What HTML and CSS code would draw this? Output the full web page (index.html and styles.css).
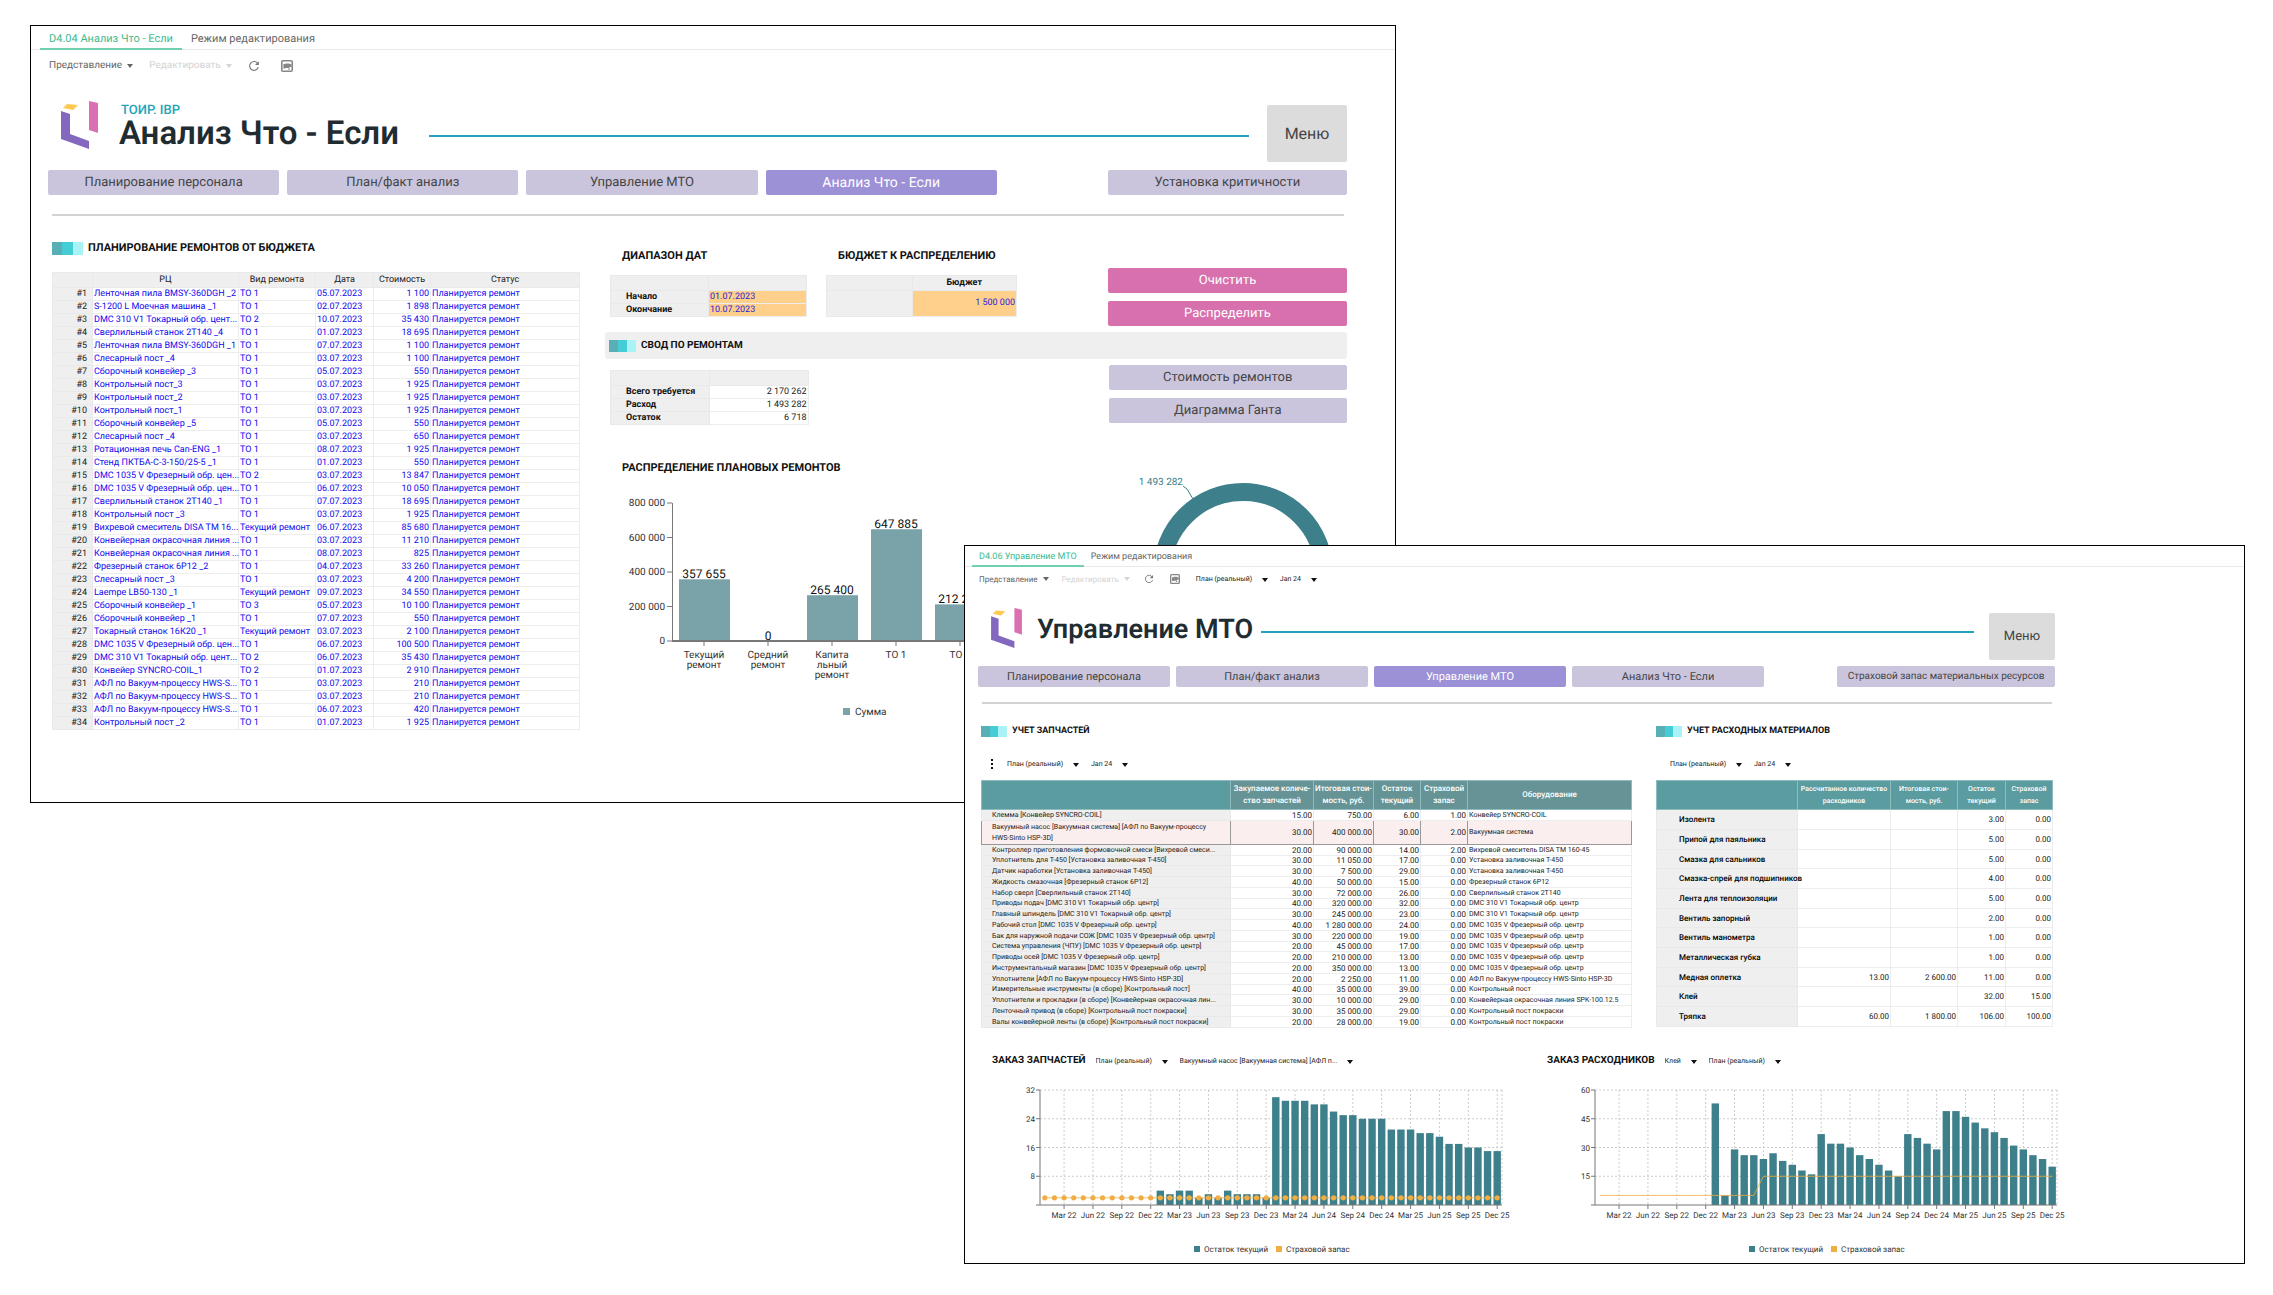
FILE: index.html
```html
<!DOCTYPE html>
<html lang="ru">
<head>
  <meta charset="UTF-8">
  <title>ТОИР. IBP</title>
  <link rel="stylesheet" href="styles.css">
</head>

<body>
  <svg class="sprite" aria-hidden="true">
    <symbol id="logo" viewBox="0 0 37 48">
      <polygon points="2,7 6,3 17,4 12,9" fill="#ffc850"/>
      <polygon points="28,0 37,2 37,32 28,29" fill="#db6fb1"/>
      <polygon points="0,10 9,13 9,33 28,40 28,48 0,38" fill="#8468c0"/>
    </symbol>
    <symbol id="refresh" viewBox="0 0 12 12">
      <path d="M9.8 3.6A4.4 4.4 0 1 0 10.3 7.2" fill="none" stroke="#777" stroke-width="1.1"/>
      <path d="M10.8 1.2v3.8H7z" fill="#777"/>
    </symbol>
    <symbol id="sheet" viewBox="0 0 12 12">
      <rect x="0.8" y="0.8" width="10.4" height="10.4" rx="1" fill="none" stroke="#888" stroke-width="1.6"/>
      <path d="M2.4 4h2v4.4h-2zM4.4 3.4h4v4.6h-4zM8.4 4h2v3h-2zM7 8.6h2v1H7z" fill="#888"/>
    </symbol>
  </svg>

  <main class="desktop">
    <!-- What-if analysis -->
    <section class="window whatIf">
      <div class="tabs">
        <a class="tab active" href="#">D4.04 Анализ Что - Если</a>
        <a class="tab" href="#">Режим редактирования</a>
      </div>
      <div class="toolbar">
        <button class="tool">Представление</button>
        <button class="tool" disabled>Редактировать</button>
        <button class="toolIcon" aria-label="Обновить"><svg><use href="#refresh"/></svg></button>
        <button class="toolIcon" aria-label="Экспорт"><svg><use href="#sheet"/></svg></button>
      </div>

      <div class="page">
        <header class="pageHeader">
          <svg class="logo"><use href="#logo"/></svg>
          <div class="titles">
            <div class="product">ТОИР. IBP</div>
            <h1>Анализ Что - Если</h1>
          </div>
          <div class="line"></div>
          <button class="menuBtn">Меню</button>
        </header>
        <nav class="navRow">
          <button class="btn">Планирование персонала</button>
          <button class="btn">План/факт анализ</button>
          <button class="btn">Управление МТО</button>
          <button class="btn current">Анализ Что - Если</button>
          <button class="btn last">Установка критичности</button>
        </nav>
        <hr>

        <div class="columns">
          <div class="repairs">
            <h2 class="sectionHead"><span class="swatch"></span>ПЛАНИРОВАНИЕ РЕМОНТОВ ОТ БЮДЖЕТА</h2>
            <table class="grid repairsTable">
              <colgroup><col class="cNum"><col class="cName"><col class="cKind"><col class="cDate"><col class="cCost"><col></colgroup>
              <thead>
                <tr><th></th><th>РЦ</th><th>Вид ремонта</th><th>Дата</th><th>Стоимость</th><th>Статус</th></tr>
              </thead>
              <tbody id="repairRows"></tbody>
            </table>
          </div>

          <div class="summary">
            <div class="params">
              <div class="dates">
                <h2>ДИАПАЗОН ДАТ</h2>
                <table class="grid small">
                  <thead><tr><th></th><th></th></tr></thead>
                  <tbody>
                    <tr><th><label for="dateFrom">Начало</label></th><td class="entry"><input id="dateFrom" value="01.07.2023"></td></tr>
                    <tr><th><label for="dateTo">Окончание</label></th><td class="entry"><input id="dateTo" value="10.07.2023"></td></tr>
                  </tbody>
                </table>
              </div>
              <div class="budget">
                <h2>БЮДЖЕТ К РАСПРЕДЕЛЕНИЮ</h2>
                <table class="grid small">
                  <colgroup><col class="cBlank"><col></colgroup>
                  <thead><tr><th></th><th><label for="budget">Бюджет</label></th></tr></thead>
                  <tbody>
                    <tr class="tall"><th></th><td class="entry num"><input id="budget" value="1 500 000"></td></tr>
                  </tbody>
                </table>
              </div>
              <div class="actions">
                <button class="btn pink">Очистить</button>
                <button class="btn pink">Распределить</button>
              </div>
            </div>

            <div class="bar">
              <h2 class="sectionHead"><span class="swatch"></span>СВОД ПО РЕМОНТАМ</h2>
            </div>

            <div class="totals">
              <table class="grid small">
                <thead><tr><th></th><th></th></tr></thead>
                <tbody>
                  <tr><th>Всего требуется</th><td class="num">2 170 262</td></tr>
                  <tr><th>Расход</th><td class="num">1 493 282</td></tr>
                  <tr><th>Остаток</th><td class="num">6 718</td></tr>
                </tbody>
              </table>
              <div class="actions">
                <button class="btn">Стоимость ремонтов</button>
                <button class="btn">Диаграмма Ганта</button>
              </div>
            </div>

            <div class="charts">
              <div class="planned">
                <h2>РАСПРЕДЕЛЕНИЕ ПЛАНОВЫХ РЕМОНТОВ</h2>
                <svg id="plannedChart" class="chart" viewBox="0 0 503 250"></svg>
              </div>
              <svg class="donut" viewBox="0 0 239 200">
                <circle cx="135" cy="112" r="81" fill="none" stroke="#3d7f8a" stroke-width="18"/>
                <path d="M75 25l4 3 6 10" fill="none" stroke="#3d7f8a"/>
                <text x="75" y="24" text-anchor="end" fill="#3d7f8a">1 493 282</text>
              </svg>
            </div>
          </div>
        </div>
      </div>
    </section>

    <!-- Supply management -->
    <section class="window supply">
      <div class="tabs">
        <a class="tab active" href="#">D4.06 Управление МТО</a>
        <a class="tab" href="#">Режим редактирования</a>
      </div>
      <div class="toolbar">
        <button class="tool">Представление</button>
        <button class="tool" disabled>Редактировать</button>
        <button class="toolIcon" aria-label="Обновить"><svg><use href="#refresh"/></svg></button>
        <button class="toolIcon" aria-label="Экспорт"><svg><use href="#sheet"/></svg></button>
        <label class="picker"><select aria-label="Версия"><option>План (реальный)</option></select></label>
        <label class="picker"><select aria-label="Период"><option>Jan 24</option></select></label>
      </div>

      <div class="page">
        <header class="pageHeader">
          <svg class="logo"><use href="#logo"/></svg>
          <h1>Управление МТО</h1>
          <div class="line"></div>
          <button class="menuBtn">Меню</button>
        </header>
        <nav class="navRow">
          <button class="btn">Планирование персонала</button>
          <button class="btn">План/факт анализ</button>
          <button class="btn current">Управление МТО</button>
          <button class="btn">Анализ Что - Если</button>
          <button class="btn last">Страховой запас материальных ресурсов</button>
        </nav>
        <hr>

        <div class="stock">
          <div class="parts">
            <h2 class="sectionHead"><span class="swatch"></span>УЧЕТ ЗАПЧАСТЕЙ</h2>
            <div class="pickers">
              <button class="dots" aria-label="Ещё"><i></i><i></i><i></i></button>
              <label class="picker"><select aria-label="Версия"><option>План (реальный)</option></select></label>
              <label class="picker"><select aria-label="Период"><option>Jan 24</option></select></label>
            </div>
            <table class="grid partsTable">
              <colgroup><col class="cPart"><col class="cQty"><col class="cSum"><col class="cRest"><col class="cRest"><col></colgroup>
              <thead>
                <tr><th></th><th>Закупаемое количе-<br>ство запчастей</th><th>Итоговая стои-<br>мость, руб.</th><th>Остаток<br>текущий</th><th>Страховой<br>запас</th><th>Оборудование</th></tr>
              </thead>
              <tbody id="partRows"></tbody>
            </table>
          </div>
          <div class="materials">
            <h2 class="sectionHead"><span class="swatch"></span>УЧЕТ РАСХОДНЫХ МАТЕРИАЛОВ</h2>
            <div class="pickers">
              <label class="picker"><select aria-label="Версия"><option>План (реальный)</option></select></label>
              <label class="picker"><select aria-label="Период"><option>Jan 24</option></select></label>
            </div>
            <table class="grid materialsTable">
              <colgroup><col class="cMaterial"><col class="cQty"><col class="cSum"><col class="cRest"><col></colgroup>
              <thead>
                <tr><th></th><th>Рассчитанное количество<br>расходников</th><th>Итоговая стои-<br>мость, руб.</th><th>Остаток<br>текущий</th><th>Страховой<br>запас</th></tr>
              </thead>
              <tbody id="materialRows"></tbody>
            </table>
          </div>
        </div>

        <div class="orders">
          <div class="order">
            <div class="orderHead">
              <h2>ЗАКАЗ ЗАПЧАСТЕЙ</h2>
              <label class="picker"><select aria-label="Версия"><option>План (реальный)</option></select></label>
              <label class="picker"><select aria-label="Запчасть"><option>Вакуумный насос [Вакуумная система] [АФЛ п...</option></select></label>
            </div>
            <svg id="partsChart" class="chart" viewBox="0 0 522 180"></svg>
          </div>
          <div class="order">
            <div class="orderHead">
              <h2>ЗАКАЗ РАСХОДНИКОВ</h2>
              <label class="picker"><select aria-label="Материал"><option>Клей</option></select></label>
              <label class="picker"><select aria-label="Версия"><option>План (реальный)</option></select></label>
            </div>
            <svg id="materialsChart" class="chart" viewBox="0 0 522 180"></svg>
          </div>
        </div>
      </div>
    </section>
  </main>

  <script src="script.js"></script>
</body>
</html>
```
FILE: styles.css
```css
* { box-sizing: border-box; margin: 0; padding: 0; }
body {
  font-family: Roboto, "Liberation Sans", sans-serif;
  font-size: 9px;
  text-rendering: geometricPrecision;
  background: #fff;
  color: #222;
}
button, select, input { font: inherit; color: inherit; border: 0; background: none; text-rendering: inherit; }
button { cursor: pointer; white-space: nowrap; }
a { color: inherit; text-decoration: none; }
.sprite { display: none; }

.desktop { position: relative; min-height: 100vh; }
.window {
  position: absolute;
  background: #fff;
  border: 1px solid #000;
}
.whatIf { top: 25px; left: 30px; right: 877px; padding-bottom: 72px; }
.supply { top: 545px; left: 964px; right: 28px; padding-bottom: 4px; }

/* Tabs and toolbar */
.tabs {
  display: flex;
  padding-left: 9px;
  height: 24px;
  border-bottom: 1px solid #e9e9e9;
  font-size: 11px;
  line-height: 26px;
  color: #666;
}
.tab { padding: 0 9px; height: 24px; }
.tab.active { color: #3dba8c; border-bottom: 2px solid #6fcfae; }
.toolbar {
  display: flex;
  align-items: center;
  height: 31px;
  padding-left: 18px;
  font-size: 10px;
  color: #666;
}
.tool { display: flex; align-items: center; gap: 5px; margin-right: 16px; }
.tool::after, .picker::after {
  content: "";
  border: 3px solid transparent;
  border-top: 4px solid currentColor;
  border-bottom: 0;
}
.tool:disabled { color: #d4d4d4; }
.toolIcon { display: flex; margin-right: 21px; }
.toolIcon svg { width: 12px; height: 12px; }

/* Page header */
.page { padding: 0 48px 0 17px; }
.pageHeader { display: flex; align-items: center; height: 57px; margin-top: 24px; }
.logo { width: 37px; height: 48px; margin: 0 21px 18px 13px; }
.titles { padding-bottom: 15px; }
.product { font-size: 13px; line-height: 16px; font-weight: 500; color: #20a5b8; padding-left: 2px; }
h1 { font-size: 33px; line-height: 30px; font-weight: 600; color: #1f2d33; white-space: nowrap; }
.line { flex: 1; height: 2px; background: #1fa3b8; margin: 5px 18px 0 30px; }
.menuBtn { width: 80px; height: 57px; background: #dcdcdc; border-radius: 2px; font-size: 16px; color: #444; }
.navRow {
  display: grid;
  grid-template-columns: repeat(4, 231fr) 95fr 239fr;
  gap: 8px;
  margin-top: 8px;
}
.btn {
  height: 25px;
  border-radius: 2px;
  background: #cac5dd;
  color: #444;
  font-size: 13px;
}
.btn.current { background: #9c90d6; color: #fff; }
.whatIf .btn.current { font-size: 14px; }
.btn.pink { background: #d870ae; color: #fff; }
.btn.last { grid-column: 6; }
hr { border: 0; height: 2px; background: #d3d3d3; margin: 19px 3px 0 4px; }

h2 { font-size: 11px; line-height: 14px; font-weight: 700; color: #111; white-space: nowrap; }
.sectionHead { display: flex; align-items: center; gap: 5px; }
.swatch {
  width: 31px;
  height: 13px;
  background: linear-gradient(90deg, #58b0b6 33%, #45ccd4 33% 67%, #a9f2f5 67%);
}

/* Tables */
.grid { width: 100%; border-collapse: collapse; table-layout: fixed; }
.grid th, .grid td {
  border: 1px solid #ededed;
  height: 13px;
  padding: 0 1px;
  line-height: 11px;
  white-space: nowrap;
}
.grid th { background: #efefef; border-color: #e9e9e9; }
.grid thead th { height: 15px; }
.num { text-align: right; }

.columns { display: grid; grid-template-columns: 528fr 742fr; gap: 25px; padding-left: 4px; }
.repairs { padding-top: 25px; }
.repairsTable { margin-top: 17px; }
.repairsTable th { font-weight: 400; }
.repairsTable tbody th { text-align: right; padding-right: 5px; }
.repairsTable td { color: #0f08f0; }
.cNum { width: 40px; }
.cName { width: 146px; }
.cKind { width: 77px; }
.cDate { width: 58px; }
.cCost { width: 57px; }

.params { display: flex; padding: 33px 0 0 5px; }
.dates { flex: 197; margin-right: 19px; }
.budget { flex: 191; }
.cBlank { width: 45%; }
.params h2 { margin: 0 0 12px 12px; }
.actions { flex: 239; display: grid; gap: 8px; margin-left: 91px; align-content: start; }
.params .actions { padding-top: 19px; }
.small th { text-align: left; padding-left: 15px; font-weight: 700; color: #111; }
.small thead th { text-align: center; padding: 0; }
.small .entry { background: #ffd08c; color: #2a1cd8; }
.entry input { display: block; width: 100%; height: 11px; }
.entry.num input { text-align: right; }
.small .tall td { height: 26px; }

.bar { height: 27px; padding: 7px 4px; margin-top: 6px; background: #efefef; border-radius: 3px; }
.bar h2 { font-size: 10px; }
.bar .swatch { width: 27px; height: 12px; }
.totals { display: flex; justify-content: space-between; padding: 6px 0 0 5px; }
.totals .small { flex: 198; margin-top: 5px; align-self: flex-start; }
.totals .actions { margin-left: 300px; }

.charts { display: flex; margin-top: 36px; }
.planned { flex: 503; }
.planned h2 { margin-left: 17px; }
.chart { display: block; width: 100%; overflow: visible; font-size: 8px; fill: #333; }
#plannedChart { font-size: 10px; }
.donut { flex: 239; font-size: 10px; align-self: flex-start; }
.axis { stroke: #777; fill: none; }
.dash { stroke: #ccc; stroke-dasharray: 2 2; fill: none; }
.value { font-size: 12px; fill: #111; }

/* The second window is the same page at a smaller scale */
.supply .tabs { height: 21px; padding-left: 7px; font-size: 9px; line-height: 23px; }
.supply .tab { height: 21px; padding: 0 7px; }
.supply .toolbar { height: 24px; padding-left: 14px; font-size: 8px; }
.supply .tool { gap: 5px; margin-right: 13px; }
.supply .tool:disabled { margin-right: 14px; }
.supply .toolIcon { margin-right: 16px; }
.supply .toolIcon svg { width: 10px; height: 10px; }
.supply .page { padding: 0 189px 0 13px; }
.supply .pageHeader { height: 47px; margin-top: 22px; }
.supply .logo { width: 31px; height: 40px; margin: 0 15px 18px 13px; }
.supply h1 { font-size: 27px; padding-bottom: 16px; }
.supply .line { margin: 0 15px 9px 8px; }
.supply .menuBtn { width: 66px; height: 47px; font-size: 13px; }
.supply .navRow { grid-template-columns: repeat(4, 192fr) 61fr 218fr; gap: 6px; margin-top: 6px; }
.supply .btn { height: 21px; font-size: 11px; }
.supply .btn.last { font-size: 10px; }
.supply hr { margin-top: 15px; }
.supply h2 { font-size: 10px; }
.supply .sectionHead { font-size: 9px; }
.supply .swatch { width: 26px; height: 11px; }

.picker { position: relative; margin-right: 12px; font-size: 7px; color: #222; }
.picker::after { position: absolute; right: 0; top: 3px; color: #111; pointer-events: none; }
.picker select { appearance: none; padding-right: 15px; }
.stock { display: grid; grid-template-columns: 651fr 397fr; gap: 24px; padding: 20px 2px 0 3px; }
.pickers { display: flex; align-items: center; height: 14px; margin: 19px 0 9px; padding-left: 10px; }
.materials .pickers { padding-left: 14px; }
.dots { display: grid; gap: 2px; margin-right: 14px; }
.dots i { width: 2px; height: 2px; background: #111; }

.supply .grid { font-size: 7px; }
.supply .grid .num { font-size: 8px; }
.supply .grid th { font-weight: 400; }
.supply .grid td, .supply .grid th { height: 11px; line-height: 9px; padding: 0 1px; }
.supply .grid tbody th { text-align: left; padding-left: 10px; }
.supply .grid thead th {
  height: 29px;
  line-height: 12px;
  font-size: 8px;
  padding: 0;
  background: #5b9ca0;
  border-color: #8fbcbf;
  color: #fff;
  font-weight: 500;
}
.supply .materialsTable thead th { font-size: 7px; }
.supply .partsTable thead th + th { background: #669496; }
.supply .partsTable tbody tr:nth-child(4n) > * { height: 10px; }
.supply .partsTable .selected > * {
  height: 24px;
  line-height: 11px;
  background: #faeeee;
  border-color: #999;
}
.supply .partsTable .selected th { white-space: normal; padding-right: 20px; }
.cPart { width: 249px; }
.partsTable .cQty { width: 83px; }
.partsTable .cSum { width: 60px; }
.partsTable .cRest { width: 47px; }
.supply .materialsTable tbody th { font-size: 8px; font-weight: 500; padding-left: 22px; color: #000; }
.supply .materialsTable tbody > tr > * { height: 20px; }
.supply .materialsTable tbody > tr:nth-child(3n) > * { height: 19px; }
.cMaterial { width: 141px; }
.materialsTable .cQty { width: 93px; }
.materialsTable .cSum { width: 67px; }
.materialsTable .cRest { width: 48px; }

.orders {
  display: grid;
  grid-template-columns: 1fr 1fr;
  gap: 33px;
  margin: 25px -14px 0 0;
  padding-left: 14px;
}
.orderHead { display: flex; align-items: center; height: 15px; margin-bottom: 11px; }
.orderHead h2 { margin-right: 10px; }
```
FILE: script.js
```js
const repairs = [
  ["Ленточная пила BMSY-360DGH _2", "ТО 1", "05.07.2023", "1 100"],
  ["S-1200 L Моечная машина _1", "ТО 1", "02.07.2023", "1 898"],
  ["DMC 310 V1 Токарный обр. цент...", "ТО 2", "10.07.2023", "35 430"],
  ["Сверлильный станок 2Т140 _4", "ТО 1", "01.07.2023", "18 695"],
  ["Ленточная пила BMSY-360DGH _1", "ТО 1", "07.07.2023", "1 100"],
  ["Слесарный пост _4", "ТО 1", "03.07.2023", "1 100"],
  ["Сборочный конвейер _3", "ТО 1", "05.07.2023", "550"],
  ["Контрольный пост_3", "ТО 1", "03.07.2023", "1 925"],
  ["Контрольный пост_2", "ТО 1", "03.07.2023", "1 925"],
  ["Контрольный пост_1", "ТО 1", "03.07.2023", "1 925"],
  ["Сборочный конвейер _5", "ТО 1", "05.07.2023", "550"],
  ["Слесарный пост _4", "ТО 1", "03.07.2023", "650"],
  ["Ротационная печь Can-ENG _1", "ТО 1", "08.07.2023", "1 925"],
  ["Стенд ПКТБА-С-3-150/25-5 _1", "ТО 1", "01.07.2023", "550"],
  ["DMC 1035 V Фрезерный обр. цен...", "ТО 2", "03.07.2023", "13 847"],
  ["DMC 1035 V Фрезерный обр. цен...", "ТО 1", "06.07.2023", "10 050"],
  ["Сверлильный станок 2Т140 _1", "ТО 1", "07.07.2023", "18 695"],
  ["Контрольный пост _3", "ТО 1", "03.07.2023", "1 925"],
  ["Вихревой смеситель DISA TM 16...", "Текущий ремонт", "06.07.2023", "85 680"],
  ["Конвейерная окрасочная линия ...", "ТО 1", "03.07.2023", "11 210"],
  ["Конвейерная окрасочная линия ...", "ТО 1", "08.07.2023", "825"],
  ["Фрезерный станок 6Р12 _2", "ТО 1", "04.07.2023", "33 260"],
  ["Слесарный пост _3", "ТО 1", "03.07.2023", "4 200"],
  ["Laempe LB50-130 _1", "Текущий ремонт", "09.07.2023", "34 550"],
  ["Сборочный конвейер _1", "ТО 3", "05.07.2023", "10 100"],
  ["Сборочный конвейер _1", "ТО 1", "07.07.2023", "550"],
  ["Токарный станок 16К20 _1", "Текущий ремонт", "03.07.2023", "2 100"],
  ["DMC 1035 V Фрезерный обр. цен...", "ТО 1", "06.07.2023", "100 500"],
  ["DMC 310 V1 Токарный обр. цент...", "ТО 2", "06.07.2023", "35 430"],
  ["Конвейер SYNCRO-COIL_1", "ТО 2", "01.07.2023", "2 910"],
  ["АФЛ по Вакуум-процессу HWS-S...", "ТО 1", "03.07.2023", "210"],
  ["АФЛ по Вакуум-процессу HWS-S...", "ТО 1", "03.07.2023", "210"],
  ["АФЛ по Вакуум-процессу HWS-S...", "ТО 1", "06.07.2023", "420"],
  ["Контрольный пост _2", "ТО 1", "01.07.2023", "1 925"]
];

const parts = [
  ["Клемма [Конвейер SYNCRO-COIL]", "15.00", "750.00", "6.00", "1.00", "Конвейер SYNCRO-COIL"],
  ["Вакуумный насос [Вакуумная система] [АФЛ по Вакуум-процессу HWS-Sinto HSP-3D]", "30.00", "400 000.00", "30.00", "2.00", "Вакуумная система"],
  ["Контроллер приготовления формовочной смеси [Вихревой смеси...", "20.00", "90 000.00", "14.00", "2.00", "Вихревой смеситель DISA TM 160-45"],
  ["Уплотнитель для T-450 [Установка заливочная T-450]", "30.00", "11 050.00", "17.00", "0.00", "Установка заливочная T-450"],
  ["Датчик наработки [Установка заливочная T-450]", "30.00", "7 500.00", "29.00", "0.00", "Установка заливочная T-450"],
  ["Жидкость смазочная [Фрезерный станок 6Р12]", "40.00", "50 000.00", "15.00", "0.00", "Фрезерный станок 6Р12"],
  ["Набор сверл [Сверлильный станок 2Т140]", "30.00", "72 000.00", "26.00", "0.00", "Сверлильный станок 2Т140"],
  ["Приводы подач [DMC 310 V1 Токарный обр. центр]", "40.00", "320 000.00", "32.00", "0.00", "DMC 310 V1 Токарный обр. центр"],
  ["Главный шпиндель [DMC 310 V1 Токарный обр. центр]", "30.00", "245 000.00", "23.00", "0.00", "DMC 310 V1 Токарный обр. центр"],
  ["Рабочий стол [DMC 1035 V Фрезерный обр. центр]", "40.00", "1 280 000.00", "24.00", "0.00", "DMC 1035 V Фрезерный обр. центр"],
  ["Бак для наружной подачи СОЖ [DMC 1035 V Фрезерный обр. центр]", "30.00", "220 000.00", "19.00", "0.00", "DMC 1035 V Фрезерный обр. центр"],
  ["Система управления (ЧПУ) [DMC 1035 V Фрезерный обр. центр]", "20.00", "45 000.00", "17.00", "0.00", "DMC 1035 V Фрезерный обр. центр"],
  ["Приводы осей [DMC 1035 V Фрезерный обр. центр]", "20.00", "210 000.00", "13.00", "0.00", "DMC 1035 V Фрезерный обр. центр"],
  ["Инструментальный магазин [DMC 1035 V Фрезерный обр. центр]", "20.00", "350 000.00", "13.00", "0.00", "DMC 1035 V Фрезерный обр. центр"],
  ["Уплотнители [АФЛ по Вакуум-процессу HWS-Sinto HSP-3D]", "20.00", "2 250.00", "11.00", "0.00", "АФЛ по Вакуум-процессу HWS-Sinto HSP-3D"],
  ["Измерительные инструменты (в сборе) [Контрольный пост]", "40.00", "35 000.00", "39.00", "0.00", "Контрольный пост"],
  ["Уплотнители и прокладки (в сборе) [Конвейерная окрасочная лин...", "30.00", "10 000.00", "29.00", "0.00", "Конвейерная окрасочная линия SPK-100.12.5"],
  ["Ленточный привод (в сборе) [Контрольный пост покраски]", "30.00", "35 000.00", "29.00", "0.00", "Контрольный пост покраски"],
  ["Валы конвейерной ленты (в сборе) [Контрольный пост покраски]", "20.00", "28 000.00", "19.00", "0.00", "Контрольный пост покраски"]
];

const materials = [
  ["Изолента", "", "", "3.00", "0.00"],
  ["Припой для паяльника", "", "", "5.00", "0.00"],
  ["Смазка для сальников", "", "", "5.00", "0.00"],
  ["Смазка-спрей для подшипников", "", "", "4.00", "0.00"],
  ["Лента для теплоизоляции", "", "", "5.00", "0.00"],
  ["Вентиль запорный", "", "", "2.00", "0.00"],
  ["Вентиль манометра", "", "", "1.00", "0.00"],
  ["Металлическая губка", "", "", "1.00", "0.00"],
  ["Медная оплетка", "13.00", "2 600.00", "11.00", "0.00"],
  ["Клей", "", "", "32.00", "15.00"],
  ["Тряпка", "60.00", "1 800.00", "106.00", "100.00"]
];

const num = v => `<td class="num">${v}</td>`;

document.getElementById("repairRows").innerHTML = repairs.map((r, i) =>
  `<tr><th>#${i + 1}</th><td>${r[0]}</td><td>${r[1]}</td><td>${r[2]}</td>${num(r[3])}<td>Планируется ремонт</td></tr>`
).join("");

document.getElementById("partRows").innerHTML = parts.map((r, i) =>
  `<tr${i === 1 ? ' class="selected"' : ""}><th>${r[0]}</th>${r.slice(1, 5).map(num).join("")}<td>${r[5]}</td></tr>`
).join("");

document.getElementById("materialRows").innerHTML = materials.map(r =>
  `<tr><th>${r[0]}</th>${r.slice(1).map(num).join("")}</tr>`
).join("");

// Planned repairs by kind
function drawPlanned() {
  const data = [
    [["Текущий", "ремонт"], 357655],
    [["Средний", "ремонт"], 0],
    [["Капита", "льный", "ремонт"], 265400],
    [["ТО 1"], 647885],
    [["ТО 2"], 212242]
  ];
  const left = 67, base = 166, scale = 138 / 800000, step = 64;
  let out = "";
  for (let v = 0; v <= 800000; v += 200000) {
    const y = base - v * scale;
    out += `<path class="axis" d="M${left - 5} ${y}h5"/>`;
    out += `<text x="${left - 7}" y="${y + 3}" text-anchor="end">${v.toLocaleString("ru")}</text>`;
  }
  data.forEach(([label, v], i) => {
    const cx = left + step / 2 + i * step;
    const y = base - v * scale;
    out += `<rect x="${cx - 25}" y="${y}" width="51" height="${v * scale}" fill="#7aa2a9"/>`;
    out += `<text class="value" x="${cx}" y="${y - 1}" text-anchor="middle">${v.toLocaleString("ru")}</text>`;
    out += `<path class="axis" d="M${cx} ${base}v5"/>`;
    label.forEach((t, n) => {
      out += `<text x="${cx}" y="${base + 17 + n * 10}" text-anchor="middle">${t}</text>`;
    });
  });
  out += `<path class="axis" d="M${left}.5 28v${base - 28}"/>`;
  out += `<path class="axis" stroke-width="2" d="M${left} ${base}h${step * 6}"/>`;
  out += `<rect x="238" y="233" width="7" height="7" fill="#7aa2a9"/><text x="250" y="240">Сумма</text>`;
  document.getElementById("plannedChart").innerHTML = out;
}

// Monthly stock bars with the safety stock line, Jan 22 - Dec 25
function drawStock(id, max, values, safety, dots) {
  const left = 48, right = 510, top = 11, base = 126;
  const month = (right - left) / 48;
  const y = v => base - v * (base - top) / max;
  const x = i => left + month * (i + 0.5);
  const names = ["Mar", "Jun", "Sep", "Dec"];
  let out = "";
  for (let k = 0; k <= 4; k++) {
    const v = max / 4 * k;
    out += `<path class="axis" d="M${left - 4} ${y(v)}h4"/>`;
    if (k) {
      out += `<path class="dash" d="M${left} ${y(v)}H${right}"/>`;
      out += `<text x="${left - 5}" y="${y(v) + 3}" text-anchor="end">${v}</text>`;
    }
  }
  for (let k = 0; k < 16; k++) {
    const gx = x(k * 3 + 2);
    out += `<path class="dash" d="M${gx} ${top}V${base}"/><path class="axis" d="M${gx} ${base}v4"/>`;
    out += `<text x="${gx}" y="139" text-anchor="middle">${names[k % 4]} ${22 + Math.floor(k / 4)}</text>`;
  }
  out += `<path class="dash" d="M${right} ${top}V${base}"/>`;
  values.forEach((v, i) => {
    out += `<rect x="${x(i + 12) - 3.7}" y="${y(v)}" width="7.4" height="${base - y(v)}" fill="#3d7f8a"/>`;
  });
  out += `<path class="axis" d="M${left} ${top}V${base}H${right}"/>`;
  const points = safety.map((v, i) => `${x(i)},${y(v)}`);
  out += `<polyline points="${points.join(" ")}" fill="none" stroke="#f0ad42" stroke-opacity="0.8"/>`;
  if (dots) {
    safety.forEach((v, i) => { out += `<circle cx="${x(i)}" cy="${y(v)}" r="2.6" fill="#f0ad42"/>`; });
  }
  out += `<rect x="202" y="167" width="6" height="6" fill="#3d7f8a"/><text x="212" y="173">Остаток текущий</text>`;
  out += `<rect x="284" y="167" width="6" height="6" fill="#f0ad42"/><text x="294" y="173">Страховой запас</text>`;
  document.getElementById(id).innerHTML = out;
}

drawPlanned();
drawStock("partsChart", 32, [
  4, 3, 4, 4, 2, 3, 2, 4, 3, 3, 3, 2,
  30, 29, 29, 29, 28, 28, 26, 25, 25, 24, 24, 24,
  21, 21, 21, 20, 20, 19, 17, 17, 16, 16, 15, 15
], Array(48).fill(2), true);
drawStock("materialsChart", 60, [
  53, 5, 29, 26, 26, 24, 27, 23, 21, 18, 16, 37,
  32, 32, 30, 26, 24, 21, 18, 15, 37, 35, 32, 29,
  49, 49, 46, 43, 40, 38, 35, 31, 29, 26, 24, 20
], Array(48).fill(5).fill(15, 17), false);
```
